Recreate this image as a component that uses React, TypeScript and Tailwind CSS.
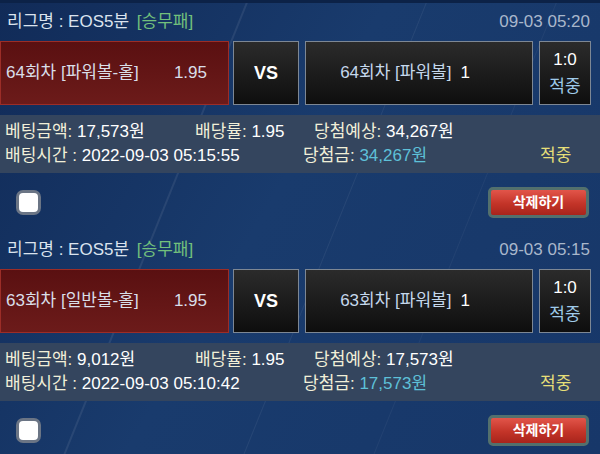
import React from 'react'

interface Bet {
  round: string
  pick: string
  odds: string
  opp: string
  date: string
  amount: string
  expected: string
  time: string
  win: string
}

const bets: Bet[] = [
  {
    round: '64회차',
    pick: '[파워볼-홀]',
    odds: '1.95',
    opp: '64회차 [파워볼]',
    date: '09-03 05:20',
    amount: '17,573원',
    expected: '34,267원',
    time: '2022-09-03 05:15:55',
    win: '34,267원',
  },
  {
    round: '63회차',
    pick: '[일반볼-홀]',
    odds: '1.95',
    opp: '63회차 [파워볼]',
    date: '09-03 05:15',
    amount: '9,012원',
    expected: '17,573원',
    time: '2022-09-03 05:10:42',
    win: '17,573원',
  },
]

function BetCard({ bet }: { bet: Bet }) {
  return (
    <div className="flex flex-col">
      {/* header */}
      <div className="flex h-[38px] items-center justify-between pl-[7px] pr-[10px] text-[17px]">
        <div className="text-[#dbe3ee]">
          리그명 : EOS5분 <span className="ml-[3px] text-[#72c07c]">[승무패]</span>
        </div>
        <div className="text-[#a9b7cb]">{bet.date}</div>
      </div>

      {/* teams */}
      <div className="flex h-[64px] pr-[9px]">
        <div className="flex w-[229px] items-center justify-between border border-[#9c2d27] bg-[linear-gradient(180deg,#5a1011,#6c1b1a)] pl-[5px] pr-[21px] text-[17px] text-[#d9dee8]">
          <span>
            {bet.round} {bet.pick}
          </span>
          <span>{bet.odds}</span>
        </div>
        <div className="ml-[4px] flex w-[66px] items-center justify-center border border-[#7d8794] bg-[linear-gradient(180deg,#2b2b2b,#0e0e0e)] text-[18px] font-bold text-white">
          VS
        </div>
        <div className="ml-[6px] flex w-[228px] items-center justify-center border border-[#7d8794] bg-[linear-gradient(180deg,#2b2b2b,#0e0e0e)] pr-[28px] text-[17px] text-[#c5d8ec]">
          <span>{bet.opp}</span>
          <span className="ml-[9px] text-white">1</span>
        </div>
        <div className="ml-[6px] flex flex-1 flex-col items-center justify-start gap-[10px] border border-[#7d8794] bg-[linear-gradient(180deg,#2b2b2b,#0e0e0e)] pt-[9px] text-[17px]">
          <span className="leading-none text-white">1:0</span>
          <span className="leading-none text-[#9fcbea]">적중</span>
        </div>
      </div>

      {/* info */}
      <div className="mt-[10px] flex h-[58px] flex-col justify-center gap-[4px] bg-[#34455e] pl-[5px] text-[17px] leading-[20px]">
        <div className="flex">
          <div className="w-[190px]">
            <span className="text-[#f1efd8]">베팅금액:</span> <span className="text-white">{bet.amount}</span>
          </div>
          <div className="w-[119px]">
            <span className="text-[#f1efd8]">배당률:</span> <span className="text-white">1.95</span>
          </div>
          <div>
            <span className="text-[#f1efd8]">당첨예상:</span> <span className="text-white">{bet.expected}</span>
          </div>
        </div>
        <div className="flex">
          <div className="w-[298px]">
            <span className="text-[#f1efd8]">배팅시간 :</span> <span className="text-white">{bet.time}</span>
          </div>
          <div className="w-[237px]">
            <span className="text-[#f1efd8]">당첨금:</span> <span className="text-[#5ec0d8]">{bet.win}</span>
          </div>
          <div className="text-[#e6df78]">적중</div>
        </div>
      </div>

      {/* actions */}
      <div className="flex h-[58px] items-center justify-between pl-[16px] pr-[11px]">
        <div className="h-[25px] w-[25px] rounded-[7px] border-[3px] border-[#6b7585] bg-white" />
        <button className="flex h-[31px] w-[101px] items-center justify-center rounded-[5px] border-[3px] border-[#53706d] bg-[linear-gradient(180deg,#e2554a,#c33428_55%,#a8241c)] text-[14px] font-bold text-white">
          삭제하기
        </button>
      </div>
    </div>
  )
}

export default function App() {
  return (
    <div
      className="relative h-[454px] w-[600px] overflow-hidden bg-[linear-gradient(120deg,#112b58,#193b6d_45%,#173769)]"
      style={{ fontFamily: '"Liberation Sans", "Noto Sans CJK KR", sans-serif' }}
    >
      {/* background streaks */}
      <div className="pointer-events-none absolute left-[150px] top-[-40px] h-[560px] w-[2px] rotate-[22deg] bg-[#ffffff14]" />
      <div className="pointer-events-none absolute left-[330px] top-[-40px] h-[560px] w-[1px] rotate-[22deg] bg-[#ffffff10]" />
      <div className="pointer-events-none absolute left-[460px] top-[-40px] h-[560px] w-[1px] rotate-[22deg] bg-[#ffffff0c]" />

      <div className="relative flex flex-col">
        <div className="h-[3px] bg-[#0c2247]" />
        {bets.map((b) => (
          <BetCard key={b.round} bet={b} />
        ))}
      </div>
    </div>
  )
}
